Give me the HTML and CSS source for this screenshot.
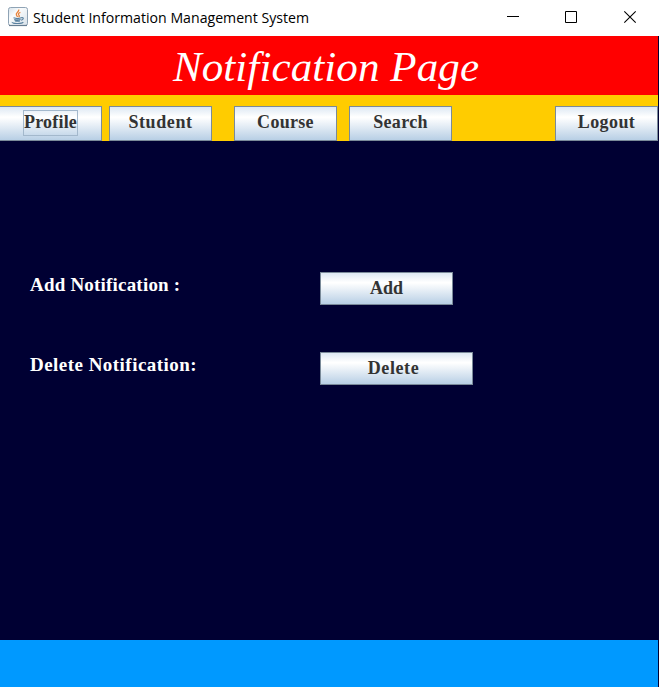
FILE: index.html
```html
<!DOCTYPE html>
<html lang="en">
<head>
<meta charset="utf-8">
<title>Student Information Management System</title>
<link rel="stylesheet" href="styles.css">
</head>
<body>
<div class="window">
  <header class="titlebar">
    <svg class="app-icon" width="20" height="20" viewBox="0 0 20 20">
      <defs><linearGradient id="tile" x1="0" y1="0" x2="1" y2="1"><stop offset="0" stop-color="#d5e1e9"/><stop offset=".35" stop-color="#fafcfd"/><stop offset="1" stop-color="#d6e0e8"/></linearGradient></defs>
      <rect x=".5" y=".5" width="19" height="18" rx="2" fill="url(#tile)" stroke="#8fa3b5"/>
      <path d="M1 18.5h18" stroke="#667d91" stroke-width="1.2"/>
      <path d="M10.7 2.5c1 2.3-3.6 3.3-2.3 5.5l1.2 2M12.4 5.3c-2.8 1.2-2.3 2-1.2 3.2.4.6 0 1.2-.6 1.6" fill="none" stroke="#e8843c" stroke-width="1.3"/>
      <path d="M5.5 10.8c2.2.8 6 .8 7.8 0M6.2 12.6c2 .6 4.7.6 6.4 0M7 14c1.7.4 3.6.4 5 0M13.2 10.7c3-.6 2.7 2-.3 2.5M4.3 15.1c-1 1.7 9.5 2 11 .1" fill="none" stroke="#58809f" stroke-width="1.1"/>
    </svg>
    <span class="caption"><span class="fit">Student Information Management System</span></span>
    <svg class="controls" width="146" height="36" viewBox="0 0 146 36" fill="none" stroke="#000">
      <path d="M7 16.5h12M65.5 11.5h11v11h-11z"/>
      <path d="M124.3 11.3l11.4 11.4M135.7 11.3l-11.4 11.4" stroke-width="1.1"/>
    </svg>
  </header>
  <main class="content">
    <h1 class="heading"><span class="fit">Notification Page</span></h1>
    <nav class="nav">
      <button class="btn profile"><span class="focus"><span class="fit">Profile</span></span></button>
      <button class="btn student"><span class="fit">Student</span></button>
      <button class="btn course"><span class="fit">Course</span></button>
      <button class="btn search"><span class="fit">Search</span></button>
      <button class="btn logout"><span class="fit">Logout</span></button>
    </nav>
    <section class="panel">
      <div class="row"><span class="label">Add Notification :</span><button class="btn add"><span class="fit">Add</span></button></div>
      <div class="row"><span class="label wide">Delete Notification:</span><button class="btn delete"><span class="fit">Delete</span></button></div>
    </section>
    <footer class="footer"></footer>
  </main>
</div>
</body>
</html>
```
FILE: styles.css
```css
* { box-sizing: border-box; }
body { margin: 0; }
.window { width: 659px; height: 687px; overflow: hidden; background: #fff; }
.titlebar { height: 36px; display: flex; align-items: flex-start; padding-left: 8px; }
.app-icon { margin-top: 7px; flex: none; }
.caption { margin-left: 5px; font: 15px/34px "Open Sans", sans-serif; color: #000; white-space: nowrap; width: 460px; }
.fit { display: inline-block; white-space: nowrap; }
.caption .fit { transform: scaleX(.942); transform-origin: left; }
.controls { flex: none; margin-left: 7px; }
.content { height: 651px; display: flex; flex-direction: column; background: #000033; border-right: 1px solid #000033; }
.heading { margin: 0; height: 59px; background: #f00; color: #fff; font: italic 43px/62px "Liberation Serif", serif; letter-spacing: .1px; text-align: center; padding-right: 6px; }
.nav { height: 46px; background: #ffcc00; display: flex; padding-top: 11px; }
.btn { height: 35px; width: 103px; flex: none; margin: 0; padding: 0 0 2px; border: 1px solid #7a8a99; background: linear-gradient(#dde8f3 0%, #fff 30%, #fff 32%, #b8cfe5 100%); color: #333; font: bold 18px/31px "Liberation Serif", serif; text-align: center; display: block; }
.profile { width: 102px; border-left: 0; }
.focus { display: block; width: 55px; height: 26px; margin: 0 0 0 23px; line-height: 23px; border: 1px solid #a3b8cc; letter-spacing: .2px; }
.student { margin-left: 7px; letter-spacing: .6px; }
.course { margin-left: 22px; letter-spacing: .3px; }
.search { margin-left: 12px; letter-spacing: .3px; }
.logout { margin-left: auto; letter-spacing: .4px; }
.panel { flex: 1; padding: 131px 0 0 30px; display: flex; flex-direction: column; gap: 47px; }
.row { height: 33px; display: flex; }
.label { width: 290px; color: #fff; font: bold 19px/26px "Liberation Serif", serif; letter-spacing: .2px; }
.label.wide { letter-spacing: .47px; }
.row .btn { height: 33px; }
.row .add { width: 133px; }
.row .delete { width: 153px; padding-right: 6px; letter-spacing: .6px; }
.footer { height: 47px; background: #0099ff; }
```
